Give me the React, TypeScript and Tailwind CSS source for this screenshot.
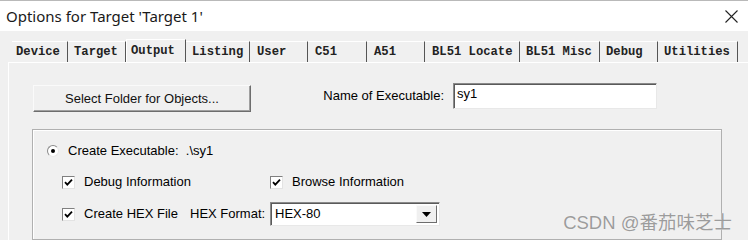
import React from 'react';

const tabs = [
  { label: 'Device', w: 56, pl: 4 },
  { label: 'Target', w: 58, pl: 6 },
  { label: 'Output', w: 60, pl: 4, active: true },
  { label: 'Listing', w: 64, pl: 6 },
  { label: 'User', w: 58, pl: 7 },
  { label: 'C51', w: 59, pl: 7 },
  { label: 'A51', w: 58, pl: 7 },
  { label: 'BL51 Locate', w: 95, pl: 7 },
  { label: 'BL51 Misc', w: 80, pl: 6 },
  { label: 'Debug', w: 58, pl: 6 },
  { label: 'Utilities', w: 80, pl: 6 },
];

const Check = () => (
  <div className="w-[13px] h-[13px] bg-white border border-t-[#808080] border-l-[#808080] border-b-[#e3e3e3] border-r-[#e3e3e3] flex items-center justify-center shrink-0">
    <svg width="11" height="11" viewBox="0 0 11 11">
      <path d="M2 5.2 L4.3 7.6 L9 2.6" fill="none" stroke="#000" strokeWidth="1.8" />
    </svg>
  </div>
);

export default function App() {
  return (
    <div
      className="w-[748px] h-[240px] overflow-hidden bg-[#f0f0f0] relative flex flex-col text-[13px] text-black"
      style={{ fontFamily: '"Liberation Sans", Arial, sans-serif' }}
    >
      {/* title bar */}
      <div className="h-[31px] shrink-0 bg-white border-t border-[#b9b9b9] flex items-center justify-between pl-[6px] pr-[10px]">
        <span className="text-[15px] text-[#1a1a1a]" style={{ fontFamily: '"Noto Sans", "Open Sans", sans-serif' }}>
          Options for Target 'Target 1'
        </span>
        <svg width="13" height="13" viewBox="0 0 13 13" className="mt-[1px]">
          <path d="M0.5 0.5 L12.5 12.5 M12.5 0.5 L0.5 12.5" stroke="#222" strokeWidth="1.1" />
        </svg>
      </div>

      {/* tab strip */}
      <div className="mt-[8px] h-[23px] shrink-0 flex items-end pl-[12px]">
        {tabs.map((t) => (
          <div
            key={t.label}
            className={
              t.active
                ? 'h-[23px] border-t border-l border-white border-r border-r-[#555] flex items-start pt-[2px] shrink-0'
                : 'h-[21px] border-t border-white border-r border-r-[#555] flex items-center shrink-0'
            }
            style={{ width: t.w, paddingLeft: t.pl }}
          >
            <span
              className="text-[12.2px] font-bold whitespace-pre text-[#222]"
              style={{ fontFamily: '"Liberation Mono", "Courier New", monospace' }}
            >
              {t.label}
            </span>
          </div>
        ))}
      </div>

      {/* panel */}
      <div className="flex-1 ml-[8px] border-l border-t border-white flex flex-col">
        <div className="mt-[20px] flex items-start">
          <button className="ml-[24px] mt-[2px] w-[218px] h-[27px] bg-[#f0f0f0] border border-t-[#fafafa] border-l-[#fafafa] border-b-[#6d6d6d] border-r-[#6d6d6d] shadow-[inset_-1px_-1px_0_#a0a0a0] text-[13px] text-[#111]">
            Select Folder for Objects...
          </button>
          <div className="w-[193px] h-[26px] flex items-center justify-end">Name of Executable:</div>
          <div className="ml-[9px] w-[204px] h-[26px] bg-white border border-t-[#8a8a8a] border-l-[#8a8a8a] border-b-[#e8e8e8] border-r-[#e8e8e8] shadow-[inset_1px_1px_0_#5a5a5a] pl-[3px] pt-[3px] leading-[14px]">
            sy1
          </div>
        </div>

        {/* group box */}
        <div className="ml-[23px] mt-[17px] w-[690px] flex-1 border border-[#b0b0b0] shadow-[inset_1px_1px_0_#fff] flex flex-col">
          <div className="mt-[12px] h-[18px] flex items-center pl-[14px]">
            <div className="w-[12px] h-[12px] rounded-full bg-white border border-t-[#8a8a8a] border-l-[#8a8a8a] border-b-[#e8e8e8] border-r-[#e8e8e8] flex items-center justify-center">
              <div className="w-[4px] h-[4px] rounded-full bg-black" />
            </div>
            <span className="ml-[9px] whitespace-pre">Create Executable:  .\sy1</span>
          </div>

          <div className="mt-[13px] h-[18px] flex items-center pl-[29px]">
            <div className="w-[208px] flex items-center">
              <Check />
              <span className="ml-[9px]">Debug Information</span>
            </div>
            <Check />
            <span className="ml-[9px]">Browse Information</span>
          </div>

          <div className="mt-[11px] h-[24px] flex items-center pl-[29px]">
            <div className="w-[128px] flex items-center">
              <Check />
              <span className="ml-[9px]">Create HEX File</span>
            </div>
            <div className="w-[80px]">HEX Format:</div>
            <div className="w-[170px] h-[24px] bg-white border border-t-[#8a8a8a] border-l-[#8a8a8a] border-b-[#e8e8e8] border-r-[#e8e8e8] shadow-[inset_1px_1px_0_#5a5a5a] flex items-center justify-between pl-[4px] pr-[2px]">
              <span>HEX-80</span>
              <div className="w-[21px] h-[18px] bg-[#f0f0f0] border border-t-[#fafafa] border-l-[#fafafa] border-b-[#6d6d6d] border-r-[#6d6d6d] flex items-center justify-center">
                <svg width="9" height="5" viewBox="0 0 9 5">
                  <path d="M0 0 H9 L4.5 5 Z" fill="#000" />
                </svg>
              </div>
            </div>
          </div>
        </div>
      </div>

      {/* watermark */}
      <div
        className="absolute right-[16px] top-[209px] text-[18.5px] text-[#9c9c9c] [text-shadow:0_0_1px_#fff]"
        style={{ fontFamily: '"Liberation Sans", "Noto Sans CJK SC", sans-serif' }}
      >
        CSDN @番茄味芝士
      </div>
    </div>
  );
}
